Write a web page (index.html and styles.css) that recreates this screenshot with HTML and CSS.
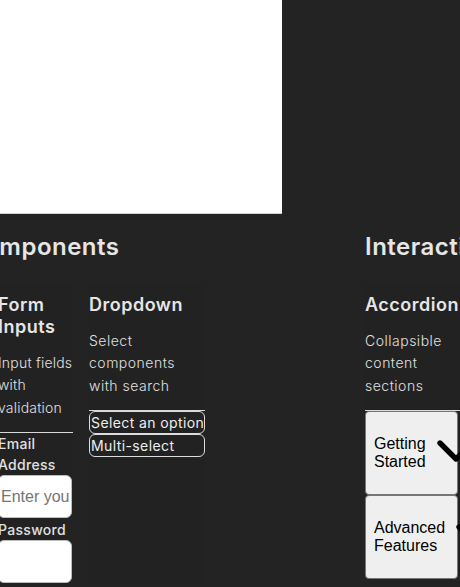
FILE: index.html
```html
<!DOCTYPE html>
<html lang="en">
<head>
<meta charset="utf-8">
<title>Components</title>
<link rel="stylesheet" href="styles.css">
</head>
<body>
<div class="hero"></div>
<main class="sections">
  <section class="section section-first">
    <h2 class="section-title">Components</h2>
    <div class="cards cards-first">
      <article class="card card-form">
        <h3 class="card-title">Form Inputs</h3>
        <p class="card-text card-text-tight">Input fields with validation</p>
        <div class="demo">
          <label class="field-label" for="email">Email Address</label>
          <input class="field-input" id="email" type="email" placeholder="Enter your email">
          <label class="field-label" for="pw">Password</label>
          <input class="field-input" id="pw" type="password">
        </div>
      </article>
      <article class="card card-dropdown">
        <h3 class="card-title">Dropdown</h3>
        <p class="card-text">Select components with search</p>
        <div class="demo">
          <div class="select-box">Select an option</div>
          <div class="select-box">Multi-select</div>
        </div>
      </article>
    </div>
  </section>
  <section class="section">
    <h2 class="section-title">Interactive</h2>
    <div class="cards">
      <article class="card card-accordion">
        <h3 class="card-title">Accordion</h3>
        <p class="card-text">Collapsible content sections</p>
        <div class="demo">
          <button class="acc-item" type="button"><span class="acc-label">Getting Started</span><svg class="acc-icon" viewBox="0 0 24 24" width="64" height="64"><path d="M6 9l6 6 6-6" fill="none" stroke="#000" stroke-width="2" stroke-linecap="round" stroke-linejoin="round"/></svg></button>
          <button class="acc-item" type="button"><span class="acc-label">Advanced Features</span><svg class="acc-icon" viewBox="0 0 24 24" width="64" height="64"><path d="M6 9l6 6 6-6" fill="none" stroke="#000" stroke-width="2" stroke-linecap="round" stroke-linejoin="round"/></svg></button>
        </div>
      </article>
    </div>
  </section>
</main>
</body>
</html>
```
FILE: styles.css
```css
html, body {
  overflow: hidden;
}
body {
  margin: 0;
  background: #232323;
  color: #e6e6e6;
  font-family: Inter, "Open Sans", sans-serif;
}
.hero {
  width: 282px;
  height: 213px;
  background: #ffffff;
  border-bottom: 1px solid #d0d0d0;
}
.sections {
  display: flex;
  gap: 32px;
  margin-left: -34px;
  margin-top: 15px;
}
.section {
  flex: none;
  width: 367px;
}
.section-title {
  margin: 0;
  font-size: 24px;
  font-weight: 600;
  line-height: 36px;
  letter-spacing: 0.5px;
  white-space: nowrap;
  color: #e6e6e6;
}
.cards {
  display: flex;
  gap: 16px;
  margin-top: 18px;
}
.cards-first {
  padding-left: 32px;
}
.card {
  flex: none;
  padding-top: 11px;
  background: #222222;
}
.card-form { width: 75px; }
.card-dropdown { width: 116px; }
.card-accordion { width: 96px; }
.card-title {
  margin: 0;
  font-size: 18px;
  font-weight: 600;
  line-height: 22px;
  letter-spacing: 0.5px;
  color: #e6e6e6;
}
.card-text {
  margin: 14px 0 13px;
  font-size: 14px;
  font-weight: 300;
  line-height: 22.4px;
  letter-spacing: 0.5px;
  color: #e0e0e0;
}
.card-text-tight {
  letter-spacing: 0.2px;
  margin-right: -2px;
}
.demo {
  border-top: 1px solid #d8d8d8;
}
.field-label {
  display: block;
  font-size: 14px;
  font-weight: 500;
  line-height: 21px;
  letter-spacing: 0.3px;
  color: #e0e0e0;
}
.field-input {
  display: block;
  box-sizing: border-box;
  width: 74px;
  height: 43px;
  margin: 0 0 1px;
  padding: 0 2px;
  border: 1px solid #bdbdbd;
  border-radius: 6px;
  background: #fff;
  font-family: "Liberation Sans", Arial, sans-serif;
  font-size: 16px;
  color: #222;
}
.field-input::placeholder {
  color: #757575;
}
.select-box {
  box-sizing: border-box;
  height: 23px;
  padding: 0 1px;
  border: 1px solid #dcdcdc;
  border-radius: 6px;
  font-size: 14px;
  font-weight: 400;
  line-height: 21px;
  letter-spacing: 0.4px;
  white-space: nowrap;
  overflow: hidden;
  color: #eeeeee;
}
.acc-item {
  display: flex;
  align-items: center;
  box-sizing: border-box;
  width: 93px;
  height: 84px;
  margin: 0;
  padding: 0 0 0 8px;
  border: 1px solid #767676;
  border-radius: 4px;
  background: #efefef;
  overflow: visible;
  font-family: "Liberation Sans", Arial, sans-serif;
  font-size: 16px;
  line-height: 18.4px;
  color: #000;
  text-align: left;
}
.acc-label {
  flex: 0 1 auto;
}
.acc-icon {
  flex: none;
  display: block;
  margin: -4px 0 0 -2px;
}
```
